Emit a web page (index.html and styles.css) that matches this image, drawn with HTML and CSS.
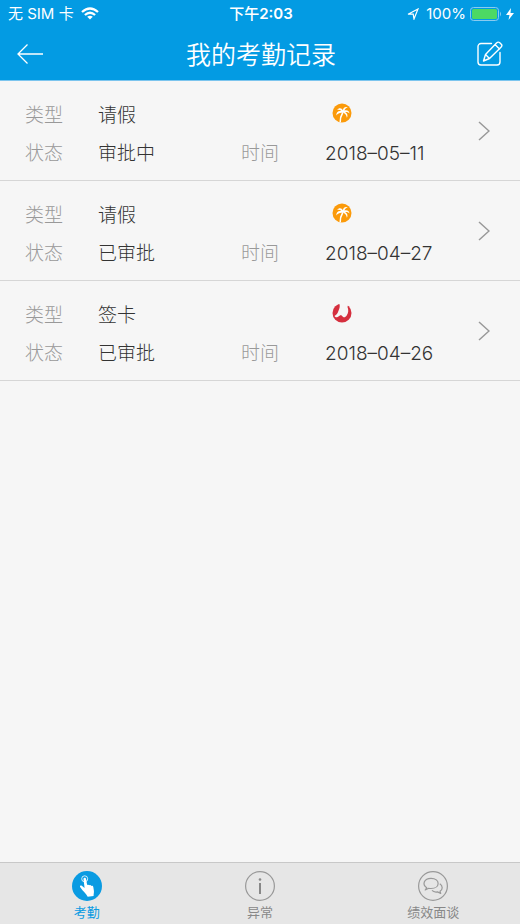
FILE: index.html
```html
<!DOCTYPE html>
<html lang="zh-CN">
<head>
<meta charset="utf-8">
<meta name="viewport" content="width=device-width, initial-scale=1">
<title>我的考勤记录</title>
<link rel="stylesheet" href="styles.css">
</head>
<body>
<svg class="defs" aria-hidden="true">
  <symbol id="palm" viewBox="0 0 20 20">
    <circle cx="10" cy="10" r="9.5" fill="#fb9a0a"/>
    <path d="M8.200 19.300C8 15.500 9 12.500 10.800 9.500" fill="none" stroke="#fff" stroke-width="1.500"/>
    <path fill="#fff" d="M10.500 9.800C8.500 9.300 6 10 4.300 12.500c-.2-3.300 2.200-5.300 5-4.400C8 6.800 6.600 6.500 5 7c1.800-2.600 4.900-2.200 5.900.3.200-2.600 2.200-4 4.900-3-1.800.5-2.800 1.600-3.300 3.200 2.200-.9 4.600.1 5 2.900-1.400-1.200-2.800-1.500-4.200-1.200 2 1.100 2.900 3.300 1.600 5.600-.3-2.300-1.400-4-3.400-5z"/>
  </symbol>
  <symbol id="card" viewBox="0 0 20 20">
    <circle cx="10" cy="10" r="9.500" fill="#d52f3e"/>
    <path fill="#f6f6f6" d="M7 0h9.500l-1 4c1.200 3 1 6-.8 8.500-1.200 1.800-2.600 2.300-3.800 1.300L9 12c-1.500.2-2.200 2-4 2.300-1.200.1-2-.4-2.500-1.200 2-1 3.200-3 4-5.300C7.400 5.300 8.500 3.500 7 0z"/>
  </symbol>
</svg>
<header class="top">
  <div class="status">
    <div class="status-left">
      <span>无 SIM 卡</span>
      <svg width="18" height="13" viewBox="0 0 18 13" fill="none" stroke="#fff" stroke-width="2.300"><path d="M1 5Q9-2 17 5M3.900 8Q9 3.500 14.100 8"/><path d="M6.200 9.800Q9 7.500 11.800 9.800L9 12.600z" fill="#fff" stroke="none"/></svg>
    </div>
    <strong class="clock">下午<b>2:03</b></strong>
    <div class="status-right">
      <svg class="locate" width="12" height="12" viewBox="0 0 12 12" fill="none" stroke="#fff" stroke-width="1.200"><path d="M1 6.200 11 1 7 11 6.200 6.200z"/></svg>
      <span>100%</span>
      <svg width="32" height="14" viewBox="0 0 32 14"><rect x=".5" y=".5" width="28" height="13" rx="3" fill="none" stroke="#8acbf0"/><rect x="2" y="2" width="25" height="10" rx="1.500" fill="#4cd964"/><path d="M30 4.500q2 2.500 0 5z" fill="#8acbf0"/></svg>
      <svg width="8" height="12" viewBox="0 0 8 12"><path d="M5 0 0 7h3.500L2.500 12 8 5H4.500z" fill="#fff"/></svg>
    </div>
  </div>
  <div class="nav">
    <button class="nav-button" aria-label="返回"><svg width="28" height="22" viewBox="0 0 28 22" fill="none" stroke="#fff" stroke-width="1.300"><path d="M26 11H1M10.500 1.500 1 11l9.500 9.500"/></svg></button>
    <h1>我的考勤记录</h1>
    <button class="nav-button" aria-label="编辑"><svg width="26" height="26" viewBox="0 0 26 26" fill="none" stroke="#fff" stroke-width="1.400" stroke-linejoin="round" stroke-linecap="round"><path d="M14.500 2.500H4a3 3 0 0 0-3 3V21a3 3 0 0 0 3 3h16a3 3 0 0 0 3-3V11.500"/><path d="M6.500 20 8.500 13.500 19.500 2Q21 .5 22.500 1.500l2 2q1 1.300-.5 2.700L12.500 17.500zM18 3.600l4.500 4.300M8.500 13.500l4 4"/></svg></button>
  </div>
</header>
<main>
  <a class="record" href="#r1">
    <span class="label">类型</span><span class="value">请假</span><svg class="kind" width="20" height="20" role="img" aria-label="请假"><use href="#palm"/></svg>
    <span class="label">状态</span><span class="value">审批中</span><span class="label">时间</span><time>2018–05–11</time>
    <svg class="chevron" width="12" height="20" viewBox="0 0 12 20"><path d="M1 1l10 9L1 19"/></svg>
  </a>
  <a class="record" href="#r2">
    <span class="label">类型</span><span class="value">请假</span><svg class="kind" width="20" height="20" role="img" aria-label="请假"><use href="#palm"/></svg>
    <span class="label">状态</span><span class="value">已审批</span><span class="label">时间</span><time>2018–04–27</time>
    <svg class="chevron" width="12" height="20" viewBox="0 0 12 20"><path d="M1 1l10 9L1 19"/></svg>
  </a>
  <a class="record" href="#r3">
    <span class="label">类型</span><span class="value">签卡</span><svg class="kind" width="20" height="20" role="img" aria-label="签卡"><use href="#card"/></svg>
    <span class="label">状态</span><span class="value">已审批</span><span class="label">时间</span><time>2018–04–26</time>
    <svg class="chevron" width="12" height="20" viewBox="0 0 12 20"><path d="M1 1l10 9L1 19"/></svg>
  </a>
</main>
<nav class="tabs">
  <a class="tab active" href="#attendance">
    <svg width="30" height="30" viewBox="0 0 30 30"><circle cx="15" cy="15" r="15" fill="#0a9be2"/><circle cx="12.700" cy="7.800" r="3" fill="none" stroke="#fff" stroke-width=".8"/><path fill="#fff" d="M11.500 8.200c-.1-1.700 2.200-1.900 2.500-.3l1.200 6.100c.8-.7 1.800-.3 2.100.3.800-.5 1.700-.1 2 .6 1-.4 1.800.1 2 1.200l.6 3.600c.2 1.800-.3 2.800-.3 5.300l-5.900.8c-1.500-3.300-4.800-5.500-7.600-9.800-.5-1.200.6-2 1.700-1.200l2.800 2.200z"/></svg>
    <span>考勤</span>
  </a>
  <a class="tab" href="#exception">
    <svg width="30" height="30" viewBox="0 0 30 30"><circle cx="15" cy="15" r="14.400" fill="none" stroke="#999" stroke-width="1.200"/><circle cx="15" cy="8.500" r="1.300" fill="#888"/><path d="M15 12v11" stroke="#888" stroke-width="2"/></svg>
    <span>异常</span>
  </a>
  <a class="tab" href="#interview">
    <svg width="30" height="30" viewBox="0 0 30 30" fill="none" stroke="#999" stroke-width="1.200" stroke-linejoin="round"><circle cx="15" cy="15" r="14.400"/><path d="M8.700 16.800C3.800 13.500 6 7.300 13 7.300c9.500 0 9.500 10.200 0 10.200-.8 0-1.500 0-2.200-.2L7.200 19zM21.800 12.800c3.200 2.200 3.100 5.700.2 7.400l.7 2.300-3.200-1.600c-2.300.4-4.300-.2-5.500-1.500"/></svg>
    <span>绩效面谈</span>
  </a>
</nav>
</body>
</html>
```
FILE: styles.css
```css
* {
  box-sizing: border-box;
}

body {
  margin: 0;
  min-height: 100vh;
  display: flex;
  flex-direction: column;
  background: #f6f6f6;
  color: #333;
  font-family: Inter, "Noto Sans CJK SC", sans-serif;
}

a {
  color: inherit;
  text-decoration: none;
}

svg {
  display: block;
  flex: none;
}

.defs {
  position: absolute;
  width: 0;
  height: 0;
}

.top {
  background: #039be3;
  color: #fff;
  border-bottom: 1px solid #7cc5ee;
}

.status {
  display: grid;
  grid-template-columns: 1fr auto 1fr;
  align-items: center;
  height: 27px;
  padding: 0 6px 0 8px;
  font-size: 15px;
  line-height: 27px;
}

.status-left,
.status-right {
  display: flex;
  align-items: center;
  gap: 7px;
}

.status-right {
  justify-content: flex-end;
  gap: 4px;
}

.locate {
  margin-right: 3px;
}

.clock {
  font-weight: 500;
}

.clock b {
  font-weight: 600;
}

.nav {
  display: flex;
  align-items: center;
  justify-content: space-between;
  height: 53px;
  padding: 0 17px;
}

.nav-button {
  padding: 0;
  border: 0;
  background: none;
}

h1 {
  margin: 0;
  padding-top: 3px;
  font-size: 25px;
  font-weight: 350;
  line-height: 36px;
}

main {
  flex: 1;
}

.record {
  position: relative;
  display: grid;
  grid-template-columns: 73px 143px 84px 1fr;
  grid-template-rows: 38px 38px;
  align-items: center;
  padding: 16px 60px 7px 25px;
  border-bottom: 1px solid #d6d6d6;
  font-size: 19px;
  font-weight: 300;
  line-height: 28px;
}

.label {
  color: #999;
}

.kind {
  grid-column: 4;
  align-self: start;
  margin: 6px 0 0 7px;
}

.chevron {
  position: absolute;
  right: 30px;
  top: 40px;
  fill: none;
  stroke: #999;
  stroke-width: 1.5px;
}

.tabs {
  display: grid;
  grid-template-columns: repeat(3, 1fr);
  height: 62px;
  border-top: 1px solid #c8c8c8;
  background: #e6e6e6;
}

.tab {
  display: flex;
  flex-direction: column;
  align-items: center;
  gap: 1px;
  padding-top: 8px;
  color: #888;
  font-size: 13px;
  line-height: 20px;
}

.active {
  color: #0a9be2;
}
```
